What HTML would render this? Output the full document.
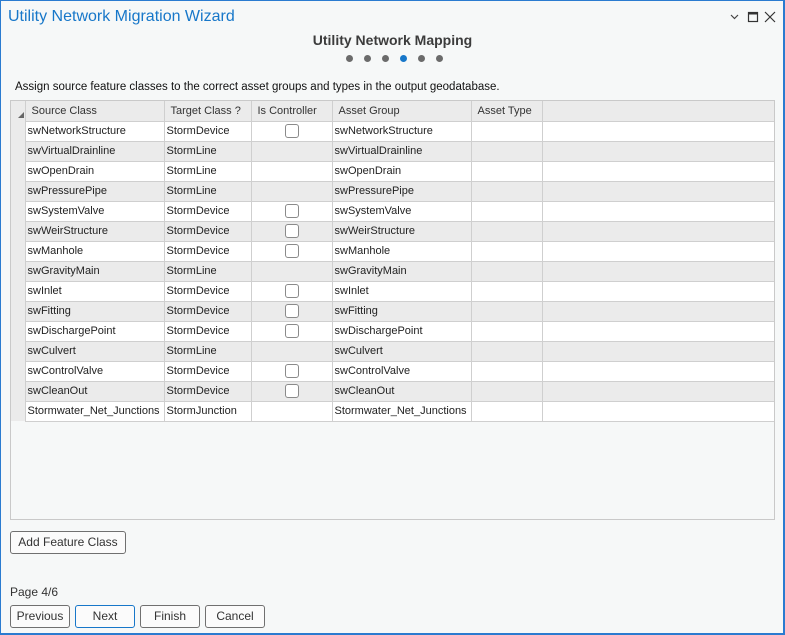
<!DOCTYPE html>
<html><head><meta charset="utf-8"><style>
*{margin:0;padding:0;box-sizing:border-box}
body{width:785px;height:635px;background:#f6f8f8;font-family:"Liberation Sans",sans-serif;position:relative;overflow:hidden;color:#1f1f1f}
.win{position:absolute;left:0;top:0;width:785px;height:635px;border:1px solid #2a7bd0;border-width:1px 2px 2px 1px}
.title{position:absolute;left:8px;top:8px;font-size:16px;color:#1777c9}
.sub{position:absolute;left:0;width:785px;text-align:center;top:32px;font-size:14px;font-weight:bold;color:#3c3c3c}
.dot{position:absolute;top:55px;width:7px;height:7px;border-radius:50%;background:#6b6b6b}
.desc{position:absolute;left:15px;top:81px;font-size:11.5px;color:#111}
.grid{position:absolute;left:10px;top:100px;width:765px;height:420px;border:1px solid #c9c9c9;background:#f6f8f8;overflow:hidden}
table{position:absolute;left:0;top:0;width:763px;border-collapse:collapse;font-size:11px;table-layout:fixed}
td{height:20px;border:1px solid #cfcfcf;padding:0 2px;white-space:nowrap;overflow:hidden;color:#222}
tr.h td{background:#ebebeb;color:#333;padding-left:6px;border-top:none}
tr.w td{background:#fff}
tr.g td{background:#ebebeb}
td.gut{background:#ebebeb!important;border:none;padding:0}
.cb{display:block;margin:0 auto;width:14px;height:14px;border:1px solid #8a8a8a;border-radius:3px;background:#fff}
.btn{position:absolute;height:23px;border:1px solid #707070;border-radius:3px;background:#fbfbfb;font-size:12px;text-align:center;line-height:21px;color:#333}
.pg{position:absolute;left:10px;top:585px;font-size:12px;color:#333}
</style></head><body>
<div class="win"></div>
<div class="title">Utility Network Migration Wizard</div>
<svg style="position:absolute;left:728px;top:10px" width="50" height="14">
<path d="M3 5 L6.5 8.5 L10 5" fill="none" stroke="#444" stroke-width="1.2"/>
<rect x="20.5" y="2.5" width="9" height="9" fill="none" stroke="#333" stroke-width="1.2"/><line x1="20" y1="3.5" x2="30" y2="3.5" stroke="#333" stroke-width="2"/>
<path d="M37 2 L47 12 M47 2 L37 12" stroke="#333" stroke-width="1.2"/>
</svg>
<div class="sub">Utility Network Mapping</div>
<div class="dot" style="left:346px"></div><div class="dot" style="left:364px"></div><div class="dot" style="left:382px"></div><div class="dot" style="left:400px;background:#1777c9"></div><div class="dot" style="left:418px"></div><div class="dot" style="left:436px"></div>
<div class="desc">Assign source feature classes to the correct asset groups and types in the output geodatabase.</div>
<div class="grid">
<table>
<colgroup><col style="width:14px"><col style="width:139px"><col style="width:87px"><col style="width:81px"><col style="width:139px"><col style="width:71px"><col style="width:232px"></colgroup>
<tr class="h"><td class="gut"></td><td>Source Class</td><td>Target Class ?</td><td>Is Controller</td><td>Asset Group</td><td>Asset Type</td><td></td></tr>
<tr class="w"><td class="gut"></td><td>swNetworkStructure</td><td>StormDevice</td><td><span class="cb"></span></td><td>swNetworkStructure</td><td></td><td></td></tr>
<tr class="g"><td class="gut"></td><td>swVirtualDrainline</td><td>StormLine</td><td></td><td>swVirtualDrainline</td><td></td><td></td></tr>
<tr class="w"><td class="gut"></td><td>swOpenDrain</td><td>StormLine</td><td></td><td>swOpenDrain</td><td></td><td></td></tr>
<tr class="g"><td class="gut"></td><td>swPressurePipe</td><td>StormLine</td><td></td><td>swPressurePipe</td><td></td><td></td></tr>
<tr class="w"><td class="gut"></td><td>swSystemValve</td><td>StormDevice</td><td><span class="cb"></span></td><td>swSystemValve</td><td></td><td></td></tr>
<tr class="g"><td class="gut"></td><td>swWeirStructure</td><td>StormDevice</td><td><span class="cb"></span></td><td>swWeirStructure</td><td></td><td></td></tr>
<tr class="w"><td class="gut"></td><td>swManhole</td><td>StormDevice</td><td><span class="cb"></span></td><td>swManhole</td><td></td><td></td></tr>
<tr class="g"><td class="gut"></td><td>swGravityMain</td><td>StormLine</td><td></td><td>swGravityMain</td><td></td><td></td></tr>
<tr class="w"><td class="gut"></td><td>swInlet</td><td>StormDevice</td><td><span class="cb"></span></td><td>swInlet</td><td></td><td></td></tr>
<tr class="g"><td class="gut"></td><td>swFitting</td><td>StormDevice</td><td><span class="cb"></span></td><td>swFitting</td><td></td><td></td></tr>
<tr class="w"><td class="gut"></td><td>swDischargePoint</td><td>StormDevice</td><td><span class="cb"></span></td><td>swDischargePoint</td><td></td><td></td></tr>
<tr class="g"><td class="gut"></td><td>swCulvert</td><td>StormLine</td><td></td><td>swCulvert</td><td></td><td></td></tr>
<tr class="w"><td class="gut"></td><td>swControlValve</td><td>StormDevice</td><td><span class="cb"></span></td><td>swControlValve</td><td></td><td></td></tr>
<tr class="g"><td class="gut"></td><td>swCleanOut</td><td>StormDevice</td><td><span class="cb"></span></td><td>swCleanOut</td><td></td><td></td></tr>
<tr class="w"><td class="gut"></td><td>Stormwater_Net_Junctions</td><td>StormJunction</td><td></td><td>Stormwater_Net_Junctions</td><td></td><td></td></tr>
</table>
<svg style="position:absolute;left:6px;top:10px" width="8" height="8"><path d="M1 7 L7 7 L7 1Z" fill="#666"/></svg>
</div>
<div class="btn" style="left:10px;top:531px;width:116px">Add Feature Class</div>
<div class="pg">Page 4/6</div>
<div class="btn" style="left:10px;top:605px;width:60px">Previous</div>
<div class="btn" style="left:75px;top:605px;width:60px;border-color:#1777c9">Next</div>
<div class="btn" style="left:140px;top:605px;width:60px">Finish</div>
<div class="btn" style="left:205px;top:605px;width:60px">Cancel</div>
</body></html>
